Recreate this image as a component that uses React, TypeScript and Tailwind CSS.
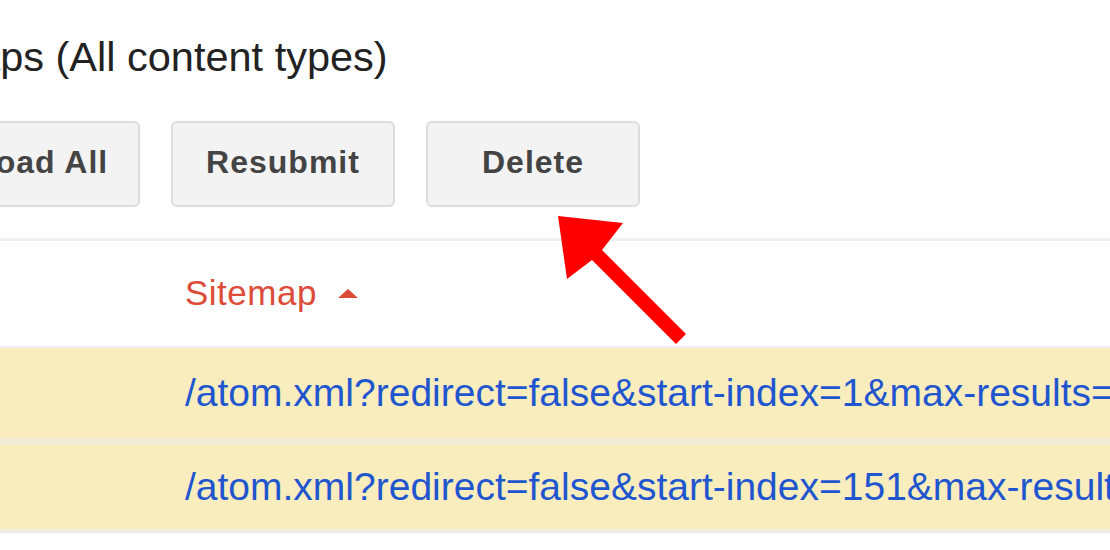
const ArrowUp = () => (
  <svg width="22" height="11" viewBox="0 0 22 11" className="ml-[20px]">
    <polygon points="11,1 21,10 1,10" fill="#dd4b39" />
  </svg>
);

const rows = [
  "/atom.xml?redirect=false&start-index=1&max-results=500",
  "/atom.xml?redirect=false&start-index=151&max-results=500",
];

export default function App() {
  return (
    <div
      className="relative w-[1110px] h-[550px] overflow-hidden bg-white"
      style={{ fontFamily: '"Liberation Sans", Arial, sans-serif' }}
    >
      {/* Title */}
      <h1 className="pt-[33px] ml-[-129px] text-[41.5px] leading-[48px] font-normal text-[#222] whitespace-nowrap">
        Sitemaps (All content types)
      </h1>

      {/* Action buttons */}
      <div className="flex gap-[31px] mt-[40px] ml-[-137px]">
        <button className="w-[277px] h-[86px] pb-[5px] shrink-0 rounded-[6px] border-2 border-[#dddddd] bg-[#f3f3f3] text-[32px] font-bold tracking-[1px] text-[#444] whitespace-nowrap">
          Download All
        </button>
        <button className="w-[224px] h-[86px] pb-[5px] shrink-0 rounded-[6px] border-2 border-[#dddddd] bg-[#f3f3f3] text-[32px] font-bold tracking-[1px] text-[#444]">
          Resubmit
        </button>
        <button className="w-[214px] h-[86px] pb-[5px] shrink-0 rounded-[6px] border-2 border-[#dddddd] bg-[#f3f3f3] text-[32px] font-bold tracking-[1px] text-[#444]">
          Delete
        </button>
      </div>

      <div className="mt-[31px] h-[3px] bg-[#efefef]" />

      {/* Table */}
      <div className="flex items-center h-[107px] pl-[185px] border-b-2 border-[#efefef]">
        <span className="text-[35px] text-[#dd4b39] tracking-[0.5px]">Sitemap</span>
        <ArrowUp />
      </div>
      <div className="bg-[#f9edbe]">
        <div className="flex items-center h-[97px] pl-[185px] border-b-[7px] border-[#f3ecd6]">
          <a className="text-[39px] text-[#1f56cf] whitespace-nowrap">{rows[0]}</a>
        </div>
        <div className="flex items-center h-[84px] pl-[185px]">
          <a className="text-[39px] text-[#1f56cf] whitespace-nowrap">{rows[1]}</a>
        </div>
      </div>
      <div className="h-[4px] bg-[#efece3]" />

      {/* Red annotation arrow */}
      <svg
        className="absolute left-0 top-0 pointer-events-none"
        width="1110"
        height="550"
        viewBox="0 0 1110 550"
      >
        <polygon
          points="558,216 623,223 602,250 686,334 676,344 592,260 567,279"
          fill="#ff0000"
        />
      </svg>
    </div>
  );
}
